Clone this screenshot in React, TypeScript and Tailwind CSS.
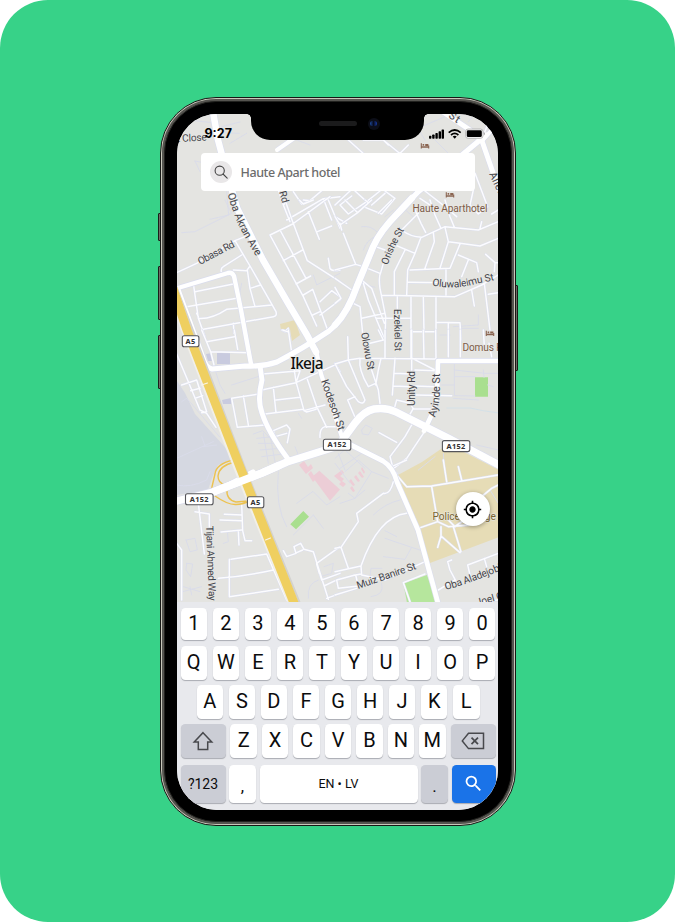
import type { ReactNode } from "react";
import { MdMyLocation, MdSearch } from "react-icons/md";

type Tile = { x: number; y: number; roads: string; faint?: string };

// Side streets, grouped by map tile; tile units are a third of a pixel.
const tiles: Tile[] = [
  {
    x: 150,
    y: 90,
    roads:
      "M372 272L385 300L400 345L415 330 M400 345L420 395 M430 305L455 342L480 332L535 285 M480 332L460 330 M520 326L545 390 M410 390L520 326L570 320",
    faint:
      "M135 213L150 245 M135 213L160 218 M215 110L270 96 M215 128L268 130 M100 88L185 98 M230 305L236 375L180 388 M290 130L240 160 M440 150L480 165",
  },
  {
    x: 335,
    y: 90,
    roads:
      "M40 150L90 195 M145 150L200 195 M145 150L160 165 M190 195L220 165 M85 150L145 150 M0 345L45 303 M60 303L95 335L40 372L15 345L50 318 M95 335L135 303 M85 350L140 372L180 325L150 303 M110 345L150 310 M0 380L35 400 M270 303L330 350 M330 350L365 380 M255 325L300 355 M420 250L458 350L430 372L405 345L415 300 M470 72L440 150 M350 72L345 85 M470 372L490 360",
    faint: "M260 110L330 80 M300 150L340 190 M150 380L175 360 M240 100L270 150 M400 95L420 72",
  },
  {
    x: 170,
    y: 200,
    roads:
      "M20 218L80 190L195 122L230 108 M195 122L240 198L318 335Q322 348 310 350L100 388 M345 0L368 65L412 182L510 245 M480 -10L368 72L300 105L400 290L440 378 M330 90L408 235 M340 182L398 150 M378 252L422 228L408 235 M400 285L428 268L472 388 M428 345L450 335 M450 305L485 272L510 290 M450 345L510 300 M415 35L448 118 M442 95L485 78 M475 175L480 205Q485 215 510 210 M475 0L510 85 M388 0L400 12L430 0 M215 165L160 200Q150 205 155 220 M75 275L190 252 M70 250L85 355L105 410 M50 320L200 295 M85 355Q125 358 170 328L305 315 M232 210L240 265L255 320 M240 265L272 255 M190 210L230 212L240 198 M190 370L192 400 M80 340L85 350 M335 390L345 395L355 385",
    faint: "M35 98L75 95L185 40L165 0 M430 225L440 255L510 220 M215 250L205 300",
  },
  {
    x: 335,
    y: 200,
    roads:
      "M30 0L68 38L15 75L0 50 M68 38L110 0 M90 0L100 8 M15 70L20 90 M25 100L62 193L0 210 M130 40L170 0 M250 40L200 90 M62 193L85 200L135 220 M200 90Q225 110 260 112L330 80L430 90L490 65 M240 30L258 70L272 97 M285 0L300 45L318 85 M330 0L345 50L358 82 M258 112L240 160L218 210L215 285 M295 97L298 125L270 205 M330 82L340 125L315 205 M340 125L375 130L435 138L490 115 M375 132L345 205L225 210 M333 210L333 285 M220 247L333 248 M122 140L150 150 M180 135L240 160 M138 215Q130 230 135 265L152 350L150 420 M210 150L178 215L178 285 M145 190L138 215 M140 286L225 287L360 290L440 255L490 225 M228 287L228 420 M265 290L267 395 M303 290L303 420 M228 395L303 395 M303 367L375 368L378 420 M340 368L340 420 M80 355L150 340 M85 250L100 300L150 420 M55 310L75 320L85 420 M125 355L228 355 M187 287L187 325 M80 240L110 265L148 370 M370 165L425 188L430 215 M400 180L380 230 M452 163L480 188L490 188 M480 188L478 215 M448 250L465 390 M460 283L490 278 M410 270L418 318 M0 235L50 270 M0 262L18 295L0 310 M435 85L440 65",
    faint: "M80 80Q110 75 130 100 M85 150Q95 120 120 110 M80 250L120 262 M355 380L430 375L430 345 M200 20L240 55 M375 385L430 385",
  },
  {
    x: 170,
    y: 330,
    roads:
      "M20 72L55 155L90 240L110 250L138 292 M35 165L80 150L110 245L95 248 M62 182L90 175 M75 205L98 197 M110 35L193 20 M95 0L122 65L240 68 M193 0L203 58 M122 65L132 105 M278 132L390 122L378 158 M275 180L378 158L510 98 M355 0L378 155L402 242L465 225 M402 242L410 246L438 238 M412 148L440 230L470 292 M338 0L352 5 M285 252L400 238 M310 172L318 248 M318 210L390 202 M268 192L185 205L202 292L285 285 M220 198L235 285 M310 302L350 285L360 297L352 338 M310 302L315 320L350 310 M495 100L510 125 M510 290L465 290Q448 295 450 322",
    faint:
      "M185 165L270 138 M130 105L150 165L165 190 M35 215L50 205L62 218L150 322 M20 385L130 335 M95 320L105 348 M250 312L278 302L320 345L340 380 M260 325L310 320 M265 340L320 340 M270 360L330 355 M275 380L340 372 M280 310L295 400 M300 315L315 395 M375 350L385 375 M395 265L385 250 M100 350L140 345",
  },
  {
    x: 335,
    y: 330,
    roads:
      "M0 102L40 90L75 85L300 87 M38 20L40 90L90 210Q85 225 70 215L35 170L2 105 M75 85Q70 120 100 170L122 160 M110 120L130 180L135 220 M130 0L145 30L105 40 M150 0L150 85 M138 85L130 120L122 165 M180 85L172 195 M178 130L230 132 M175 168L230 170 M230 0L230 120 M265 0L267 85 M302 0L303 87 M228 0L228 85 M232 85L300 120 M240 168L300 170 M240 195L350 197 M185 210L225 220L235 237L290 237 M185 210L178 235 M235 235L218 265 M340 0L340 80 M376 0L376 80 M240 120L305 122 M230 285L210 320L165 380L175 418 M265 310L215 385L172 418 M132 308L185 337 M60 200L38 210L60 262 M462 40L470 80 M445 0L448 50",
    faint:
      "M358 100L358 197L420 198 M320 165L358 165 M358 120L450 130L490 130 M445 120L447 142 M358 140L420 140 M458 165L475 170 M315 15L345 15 M355 205L430 210 M80 300L92 285L112 295L100 315L82 312L80 300 M425 345L490 360 M10 370L30 420 M30 360L90 415 M0 385L40 350 M15 415L80 370 M325 370L328 410 M300 380L250 420",
  },
  {
    x: 170,
    y: 460,
    roads:
      "M20 250L35 270L35 420 M85 130L103 282 M75 155L118 162L118 200 M215 130L218 212L225 242L245 242 M163 163L215 165 M150 180L215 182 M153 216L215 210 M205 212L207 255 M183 298L290 282L350 420 M178 298L178 410L325 388 M145 355Q220 350 310 330 M340 272L350 290L378 280L372 260L392 250L402 268L430 275L475 418 M380 278L398 270 M510 260L440 310L455 360L510 340 M448 340L440 312 M462 378L510 355 M470 415L510 400",
    faint:
      "M20 75Q60 85 110 60L120 35 M325 35Q315 140 350 200 M370 225L430 165 M430 165L460 205 M380 130L428 95 M430 95L470 135L510 110 M48 240L75 235L82 270L60 275L48 240 M50 310L68 312L62 350L48 330L50 310 M38 395L95 380 M40 380L90 395 M60 380L65 405 M160 250L175 245L172 215 M415 415Q410 370 445 360 M462 320L490 310L485 340L450 350",
  },
  {
    x: 335,
    y: 460,
    roads:
      "M175 65Q165 105 145 100L65 160L70 185L18 262L0 265 M18 262L40 325 M0 335L78 318Q130 170 215 160 M78 318L80 345L150 360L270 305 M78 342L62 345L70 378L10 385L5 360L60 345 M0 405L65 385 M165 25L185 40 M170 20L215 0 M185 45L215 80L290 78L490 45 M325 0L335 65 M370 20L380 60 M290 80L308 185L250 205 M308 185L340 200L400 195 M318 200L318 228L308 262 M318 228L375 278 M355 200L378 275 M340 180L360 200L400 170 M350 300L338 305L345 330L362 362 M405 345L398 315L490 280 M448 295L455 320 M310 390L360 360 M490 75L470 85L440 110 M205 368L270 342 M490 420L440 425 M205 368L225 425",
    faint:
      "M105 352L108 325L140 325 M145 290L210 298L230 262L270 275 M150 212L185 230 M150 235L230 262 M115 165Q150 130 195 120 M108 410Q150 405 140 370 M30 35L70 0L110 35L60 115L40 100 M0 10L45 70 M110 35L160 55 M60 115L90 90 M465 90L490 130 M15 130L60 115",
  },
];

const avenues: { d: string; w: number }[] = [
  { d: "M213 112L218 140L222 155L237 208L263 260L288 303L307 335L316 352", w: 6.5 },
  { d: "M316 350L321 374L343 440", w: 4.2 },
  { d: "M277 150L300 134", w: 4 },
  { d: "M486 135L462 155L418 192L398 213Q380 231 373 247L357 286Q345 318 329 331Q302 349 277 362Q262 367 245 366L212 369Q206 368 203 358L178 290", w: 5.2 },
  { d: "M412 198L398 213Q380 231 373 247L357 286Q348 312 335 325", w: 6.5 },
  { d: "M178 288L228 273Q232 272 234 276L241 310L251 364", w: 4.4 },
  { d: "M260 366L262 380Q257 400 262 413Q268 432 288 459", w: 5 },
  { d: "M443 112L470 130L482 141L499 190", w: 5 },
  { d: "M482 141L499 122", w: 4 },
  { d: "M498 361L438 361L437 395L433 412L424 431", w: 4.6 },
  { d: "M177 501L213 493L253 472", w: 5.2 },
  { d: "M177 501L213 492L262 473L287 462L338 446L355 423Q364 411 374 409Q386 407 396 412L448 438L499 465", w: 7.4 },
  { d: "M345 442L383 461Q393 467 397 482L418 530L438 603", w: 4.8 },
];

type Label = { t: string; d: string; len: number; c?: string; s?: number };

const labels: Label[] = [
  { t: "t Close", d: "M177 142L240 139", len: 30 },
  { t: "Oba Akran Ave", d: "M227.500 194Q234.500 219 243 234L262 267", len: 69, s: 10.7 },
  { t: "Rd", d: "M279 192L287 220", len: 12 },
  { t: "Obasa Rd", d: "M200 265L246 241", len: 40 },
  { t: "Orishe St", d: "M388 265Q392 250 408 223", len: 39 },
  { t: "Oluwaleimu St", d: "M432 285.500Q455 290 475 284L510 277", len: 63 },
  { t: "Haute Aparthotel", d: "M412.5 212.2L500 212.2", len: 75, c: "#7d5c49" },
  { t: "Ezekiel St", d: "M394 309L395 370", len: 42 },
  { t: "Olowu St", d: "M361 333L370.5 385", len: 38 },
  { t: "Unity Rd", d: "M415 406L415 350", len: 35 },
  { t: "Ayinde St", d: "M435 418Q440 402 440 390L440 350", len: 45, s: 10.7 },
  { t: "Kodesoh St", d: "M321 381L342 441", len: 53, s: 10.7 },
  { t: "Domus R", d: "M462.5 350.7L520 350.7", len: 40, c: "#7d5c49" },
  { t: "Tijani Ahmed Way", d: "M206 526L210 630", len: 75 },
  { t: "Muiz Banire St", d: "M358 589L425 566", len: 62 },
  { t: "Oba Aladejobi St", d: "M446 590Q475 582 520 562", len: 71 },
  { t: "Joel O", d: "M477 606L520 594", len: 28 },
  { t: "Police College R", d: "M432.5 520L520 520", len: 72, c: "#7c6830" },
  { t: "St", d: "M448 117L470 132", len: 11, s: 10.7 },
  { t: "Allen", d: "M489 174L506 210", len: 25, s: 10.7 },
];

const shields = [
  { t: "A5", x: 182.3, y: 335.7, w: 16.6 },
  { t: "A152", x: 323.4, y: 439.2, w: 27.4 },
  { t: "A152", x: 442.4, y: 440.6, w: 27.4 },
  { t: "A152", x: 185.5, y: 493.7, w: 27.6 },
  { t: "A5", x: 247.4, y: 496.7, w: 16.4 },
];

const beds = [
  [425, 146],
  [450, 195],
  [490, 333.5],
];

function CityMap() {
  return (
    <svg
      className="block h-[488px] w-[322px]"
      viewBox="177 114 322 488"
      fill="none"
      strokeLinejoin="round"
      strokeLinecap="round"
    >
      <rect x="177" y="114" width="322" height="488" fill="#e4e4e1" />
      <path d="M177 381L185 393L195 414L213 434L224 446L233 459L218 465L212 478L208 490L177 495Z" fill="#d5d8e1" />
      <path d="M438 451L422 462L398 475L430 563L499 537V470L448 444Z" fill="#e6dcb6" />
      <path d="M280 324L295 320L300 335L292 341L290 329L281 330Z" fill="#e6dcb6" />
      <path d="M475 377.3h13v19.4h-13z M290.3 524.3L303.3 511L309 516.7L296 529.3Z" fill="#a9df8f" />
      <path d="M403.3 583.3L427 575L437 603H407Z" fill="#b6e69d" />
      <path d="M312.3 476.7L319.3 470.7L340 489.5L330 500.7Z" fill="#eccdd6" />
      <path
        d="M299 465L304 461L308 467L311 464L313 468L306 474Z M308 474l3-3 5 8-3 3z M334 476l8-6 2 3-4 3 4 3-3 3zM339 484l3-3 4 3-3 3zM349 481l2-2 4 6-2 1zM354 477l2-2 4 6-2 1zM358 473l2-2 4 6-2 1zM350 488l2-2 3 5-2 1zM361 469l1-2 3 5-1 2z"
        fill="#eecdd6"
      />
      <path d="M217 353l4-1 0 0h9v12h-13zM222 400l9-2v6h-8zM206 354l6-1v8l-4 0z" fill="#c9cbdf" />
      <path d="M447 408H470Q482 411 499 413" stroke="#cfdfea" strokeWidth=".8" />

      {tiles.map((t, i) => (
        <g key={i} transform={`translate(${t.x} ${t.y}) scale(.33333)`}>
          {t.faint && <path d={t.faint} stroke="#d9dcea" strokeWidth="2.800" />}
          <path d={t.roads} stroke="#dcdfee" strokeWidth="7.200" />
          <path d={t.roads} stroke="#fcfcfe" strokeWidth="4.400" />
        </g>
      ))}

      <path
        d="M233 460Q216 464 215 474L211 491 M233 462.500Q219 466 218 476Q218 483 225 485 M215 496Q228 505 236 504.500Q242 504.500 250 501 M227 489Q226 500 236 502L248 501"
        stroke="#ecc250"
        strokeWidth="1.400"
      />
      {avenues.map((a, i) => (
        <path key={i} d={a.d} stroke="#dadded" strokeWidth={a.w + 1.2} strokeLinecap="butt" />
      ))}
      {avenues.map((a, i) => (
        <path key={i} d={a.d} stroke="#ffffff" strokeWidth={a.w} />
      ))}
      <path d="M172 288L188 330L241 470L295 603" stroke="#d3d2cf" strokeWidth="11" />
      <path d="M172 288L186 330L238 466L293 603" stroke="#f1efe8" strokeWidth="10.200" />
      <path d="M172 286L187 330L240 467L294 603" stroke="#efcf60" strokeWidth="9" />
      <path d="M201.500 385l6-2 M265.500 540l5-2" stroke="#f9f5e8" strokeWidth="1.200" />
      <path d="M213 492L262 473L280 465" stroke="#fff" strokeWidth="7.600" strokeLinecap="butt" />

      {beds.map(([x, y], i) => (
        <g key={i} transform={`translate(${x} ${y})`} stroke="#8a6450" strokeWidth="1.100" strokeLinecap="butt">
          <path d="M-3.700 -2.800V2.600M3.700 2.600V-.4" />
          <path d="M-3.700 1H3.700" strokeWidth="1.500" />
          <path d="M-2.400 -1.200H-.8M.2 -1H3.400" strokeWidth="1.800" />
        </g>
      ))}

      {labels.map((l, i) => (
        <g key={i} fontFamily="'Roboto','Noto Sans',sans-serif" fontSize={l.s ?? 10.2}>
          <path id={`street-${i}`} d={l.d} />
          <text
            fill={l.c ?? "#44444a"}
            stroke="#e9e9e6"
            strokeWidth="1.400"
            strokeOpacity=".8"
            paintOrder="stroke"
            textLength={l.len}
          >
            <textPath href={`#street-${i}`} textLength={l.len}>
              {l.t}
            </textPath>
          </text>
        </g>
      ))}

      {shields.map((s, i) => (
        <g key={i}>
          <rect x={s.x} y={s.y} width={s.w} height="11" rx="2" fill="#fff" stroke="#55555a" strokeWidth="1.100" />
          <text
            x={s.x + s.w / 2}
            y={s.y + 8.2}
            textAnchor="middle"
            fill="#333"
            fontFamily="'Noto Sans',sans-serif"
            fontWeight="700"
            fontSize="7.400"
            letterSpacing=".3"
          >
            {s.t}
          </text>
        </g>
      ))}
      <text
        x="290.500"
        y="369"
        fill="#111"
        stroke="#ececea"
        strokeWidth="2"
        paintOrder="stroke"
        fontFamily="'Noto Sans',sans-serif"
        fontWeight="500"
        fontSize="15.500"
        textLength="33"
      >
        Ikeja
      </text>
    </svg>
  );
}

function StatusIcons() {
  return (
    <svg className="h-[12px] w-[56px]" viewBox="0 0 56 12" fill="#000">
      <rect x="0" y="7.700" width="2.400" height="3" rx=".7" />
      <rect x="3.200" y="6.600" width="2.400" height="4.100" rx=".7" />
      <rect x="6.400" y="5" width="2.400" height="5.700" rx=".7" />
      <rect x="9.600" y="3.200" width="2.400" height="7.500" rx=".7" />
      <rect x="12.600" y="1.400" width="2.400" height="9.300" rx=".7" />
      <g fill="none" stroke="#000" strokeWidth="1.700">
        <path d="M19.700 4.600Q25.700 -.6 31.700 4.600" />
        <path d="M22 7Q25.700 3.700 29.400 7" />
      </g>
      <path d="M23.700 8.600Q25.700 7 27.700 8.600L25.700 10.800Z" />
      <rect x="36.600" y="1" width="17.400" height="9.400" rx="2.600" fill="#f4f4f4" stroke="#a8a8a8" strokeWidth=".7" />
      <rect x="37.800" y="2.300" width="15" height="6.800" rx="1.400" />
      <path d="M54.800 4v3.400q1-.5 1-1.700t-1-1.700z" fill="#999" />
    </svg>
  );
}

function Key({ children, className = "w-[26.500px] bg-white text-[20px]" }: { children: ReactNode; className?: string }) {
  return (
    <div
      className={`flex h-full shrink-0 items-center justify-center rounded-[4.500px] leading-none shadow-[0_1px_1px_#a9abb2] ${className}`}
    >
      {children}
    </div>
  );
}

function Letters({ keys }: { keys: string }) {
  return (
    <>
      {keys.split("").map((k) => (
        <Key key={k}>
          <span className="-translate-y-px">{k}</span>
        </Key>
      ))}
    </>
  );
}

function Keyboard() {
  return (
    <div className="flex h-[208px] flex-col bg-[#e8e9ed] pt-[6px] font-['Roboto',sans-serif] text-[#0c0c0d]">
      <div className="flex h-[32.500px] justify-between pr-[2.500px] pl-[4px]">
        <Letters keys="1234567890" />
      </div>
      <div className="mt-[5.500px] flex h-[34px] justify-between pr-[2.500px] pl-[4px]">
        <Letters keys="QWERTYUIOP" />
      </div>
      <div className="mt-[5px] flex h-[34px] justify-between pr-[18.500px] pl-[20px]">
        <Letters keys="ASDFGHJKL" />
      </div>
      <div className="mt-[5.500px] flex h-[34px] justify-between pr-[2.500px] pl-[4px]">
        <Key className="w-[45px] bg-[#cbcdd5]">
          <svg className="h-[20px] w-[22px]" viewBox="0 0 22 20" fill="none" stroke="#48494d" strokeWidth="1.500">
            <path d="M11 1.700L19.800 11H15.700V18.500H6.300V11H2.200Z" />
          </svg>
        </Key>
        <Letters keys="ZXCVBNM" />
        <Key className="w-[45px] bg-[#cbcdd5]">
          <svg className="h-[18px] w-[24px]" viewBox="0 0 24 18" fill="none" stroke="#48494d" strokeWidth="1.500">
            <path d="M7.500 1.200H22.500V16.600H7.500L1.300 8.900Z" />
            <path d="M10.500 5.600L17 12.200M17 5.600L10.500 12.200" strokeWidth="1.700" />
          </svg>
        </Key>
      </div>
      <div className="mt-[7px] flex h-[37.500px] justify-between pr-[2.500px] pl-[4px]">
        <Key className="w-[45px] bg-[#cbcdd5] text-[14px]">?123</Key>
        <Key className="w-[26.500px] bg-white text-[17px]">
          <span className="translate-y-[3px]">,</span>
        </Key>
        <Key className="w-[158px] bg-white text-[12.500px]">EN • LV</Key>
        <Key className="w-[26.500px] bg-[#cbcdd5] text-[17px]">
          <span className="translate-y-[3px]">.</span>
        </Key>
        <Key className="w-[44px] bg-[#1a73e8] text-white">
          <MdSearch size={21} />
        </Key>
      </div>
    </div>
  );
}

export default function App() {
  return (
    <div className="h-[923px] w-[675px] bg-white">
      <div className="flex h-[922px] w-full justify-center rounded-[48px] bg-[#37d288] pt-[97px]">
        <div className="relative h-[728.500px] w-[356px]">
          <div className="absolute top-[116px] -left-[2px] h-[28px] w-[4px] rounded-l-[1px] border border-[#1b1c19] bg-[#6d6c65]" />
          <div className="absolute top-[169px] -left-[2px] h-[54px] w-[4px] rounded-l-[1px] border border-[#1b1c19] bg-[#6d6c65]" />
          <div className="absolute top-[238px] -left-[2px] h-[54px] w-[4px] rounded-l-[1px] border border-[#1b1c19] bg-[#6d6c65]" />
          <div className="absolute top-[188px] -right-[2px] h-[86px] w-[4px] rounded-r-[1px] border border-[#1b1c19] bg-[#6d6c65]" />
          <div className="relative h-full w-full rounded-[56px] border border-[#171815] bg-[#c9c8bb] p-px">
            <div className="h-full w-full rounded-[54px] bg-[#55544f] p-[2px]">
              <div className="h-full w-full rounded-[52px] border border-[#22221f] bg-black pt-[12px] pl-[12px]">
                <div className="relative flex h-[695.500px] w-[321.500px] flex-col overflow-hidden rounded-[40px] bg-[#e8e9ed]">
                  <div className="relative h-[487.500px] shrink-0 overflow-hidden">
                    <CityMap />
                    <div className="absolute top-0 left-[74px] flex h-[25.500px] w-[173px] items-center rounded-b-[19px] bg-black pl-[68px]">
                      <div className="mt-[-6px] h-[5px] w-[38px] rounded-full bg-[#1b1b1c]" />
                      <div className="mt-[-6px] ml-[11px] flex h-[12px] w-[12px] items-center justify-center rounded-full bg-[#0c0e18]">
                        <div className="h-[5px] w-[7px] rounded-full bg-linear-to-r from-[#1c4a9c] via-[#070b1e] to-[#173aa6]" />
                      </div>
                    </div>
                    <div className="absolute top-0 left-[70px] h-[4px] w-[4px] bg-[radial-gradient(circle_at_0_100%,transparent_3.500px,#000_4px)]" />
                    <div className="absolute top-0 left-[247px] h-[4px] w-[4px] bg-[radial-gradient(circle_at_100%_100%,transparent_3.500px,#000_4px)]" />
                    <div className="absolute top-[13px] left-[28px] font-['Inter',sans-serif] text-[12.500px] leading-[14px] font-bold text-black">
                      9:27
                    </div>
                    <div className="absolute top-[13.500px] left-[252px] flex">
                      <StatusIcons />
                    </div>
                    <div className="absolute top-[38.500px] left-[24px] flex h-[38.500px] w-[274px] items-center rounded-[4px] bg-white pl-[9px]">
                      <div className="flex h-[22px] w-[22px] items-center justify-center rounded-full bg-[#e9e7e8]">
                        <svg className="h-[14px] w-[14px]" viewBox="0 0 14 14" fill="none" stroke="#444" strokeWidth="1.100" strokeLinecap="round">
                          <circle cx="5.700" cy="5.700" r="4.600" />
                          <path d="M9 9L13.200 13.200" />
                        </svg>
                      </div>
                      <span className="mt-[3px] ml-[9px] font-['Noto_Sans',sans-serif] text-[12.500px] font-medium tracking-[-0.430px] whitespace-nowrap text-[#6c6c6c]">
                        Haute Apart hotel
                      </span>
                    </div>
                    <div className="absolute top-[378px] left-[279px] flex h-[34px] w-[34px] items-center justify-center rounded-full bg-white text-black shadow-[0_1px_4px_rgba(0,0,0,0.35)]">
                      <MdMyLocation size={19} />
                    </div>
                  </div>
                  <Keyboard />
                </div>
              </div>
            </div>
          </div>
        </div>
      </div>
    </div>
  );
}
